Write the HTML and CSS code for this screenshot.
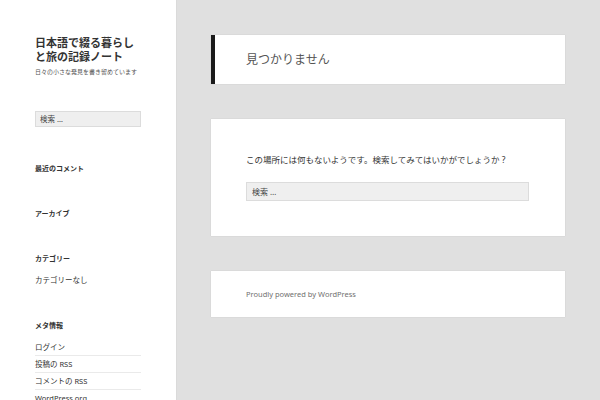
FILE: index.html
```html
<!DOCTYPE html>
<html lang="ja">
<head>
    <meta charset="UTF-8">
    <meta name="viewport" content="width=device-width, initial-scale=1.0">
    <title>見つかりません</title>
    <link rel="stylesheet" href="styles.css">
</head>
<body>
    <div class="site">
        <!-- Sidebar -->
        <aside class="sidebar">
            <div class="branding">
                <p class="site-title"><a href="#">日本語で綴る暮らしと旅の記録ノート</a></p>
                <p class="site-description">日々の小さな発見を書き留めています</p>
            </div>

            <div class="widget widget-search">
                <input type="search" class="search-field" placeholder="検索 …">
            </div>

            <div class="widget">
                <h2 class="widget-title">最近のコメント</h2>
                <ul></ul>
            </div>

            <div class="widget">
                <h2 class="widget-title">アーカイブ</h2>
                <ul></ul>
            </div>

            <div class="widget">
                <h2 class="widget-title">カテゴリー</h2>
                <ul>
                    <li>カテゴリーなし</li>
                </ul>
            </div>

            <div class="widget">
                <h2 class="widget-title">メタ情報</h2>
                <ul>
                    <li><a href="#">ログイン</a></li>
                    <li><a href="#">投稿の RSS</a></li>
                    <li><a href="#">コメントの RSS</a></li>
                    <li><a href="#">WordPress.org</a></li>
                </ul>
            </div>
        </aside>

        <!-- Main content -->
        <main class="main">
            <header class="page-header">
                <h1 class="page-title">見つかりません</h1>
            </header>

            <section class="entry">
                <p>この場所には何もないようです。検索してみてはいかがでしょうか ?</p>
                <input type="search" class="search-field search-wide" placeholder="検索 …">
            </section>

            <footer class="site-footer">
                <a href="#">Proudly powered by WordPress</a>
            </footer>
        </main>
    </div>
</body>
</html>
```

FILE: styles.css
```css
body {
    margin: 0;
    font-family: "Noto Sans", "Noto Sans CJK JP", sans-serif;
    background-color: #e0e0e0;
    color: #333;
}

a {
    color: inherit;
    text-decoration: none;
}

.site {
    display: flex;
    height: 100vh;
    overflow: hidden;
}

/* Sidebar */
.sidebar {
    flex: none;
    display: flex;
    flex-direction: column;
    width: 176px;
    padding: 0 35px;
    box-sizing: border-box;
    background-color: #fff;
    box-shadow: 0 0 1px rgba(0, 0, 0, 0.15);
}

.branding {
    padding-top: 36px;
    margin-bottom: 35px;
}

.site-title {
    margin: 0;
    font-size: 11px;
    line-height: 14px;
    font-weight: 700;
    color: #333;
}

.site-description {
    margin: 4px 0 0;
    font-size: 6px;
    line-height: 8px;
    color: #555;
}

.search-field {
    display: block;
    width: 100%;
    height: 16px;
    box-sizing: border-box;
    margin: 0;
    padding: 0 4px;
    border: 1px solid #dcdcdc;
    background-color: #efefef;
    font-family: inherit;
    font-size: 7.5px;
    color: #333;
}

.search-field::placeholder {
    color: #444;
}

.widget {
    flex: none;
    margin-bottom: 27px;
}

.widget-search {
    margin-bottom: 37px;
}

.widget-title {
    margin: 0 0 8px;
    font-size: 7px;
    line-height: 10px;
    font-weight: 700;
}

.widget ul {
    list-style: none;
    margin: 0;
    padding: 0;
}

.widget li {
    padding: 3px 0;
    font-size: 7.5px;
    line-height: 10px;
    border-top: 1px solid #eaeaea;
}

.widget li:first-child {
    border-top: 0;
}

.widget li:last-child {
    padding-bottom: 9px;
}

/* Main column */
.main {
    flex: 1;
    display: flex;
    flex-direction: column;
    gap: 35px;
    padding: 35px;
}

.page-header,
.entry,
.site-footer {
    background-color: #fff;
    box-shadow: 0 0 1px rgba(0, 0, 0, 0.15);
}

.page-header {
    border-left: 4px solid #1a1a1a;
    padding: 17px 31px;
}

.page-title {
    margin: 0;
    font-size: 12px;
    line-height: 15px;
    font-weight: 400;
    color: #555;
}

.entry {
    padding: 36px 36px 35px 35px;
}

.entry p {
    margin: 0 0 17px;
    font-size: 8.5px;
    line-height: 10px;
}

.search-wide {
    height: 19px;
    padding: 0 5px;
    font-size: 8px;
}

.site-footer {
    padding: 18px 35px;
    font-size: 7.5px;
    line-height: 10px;
    color: #707070;
}
```
